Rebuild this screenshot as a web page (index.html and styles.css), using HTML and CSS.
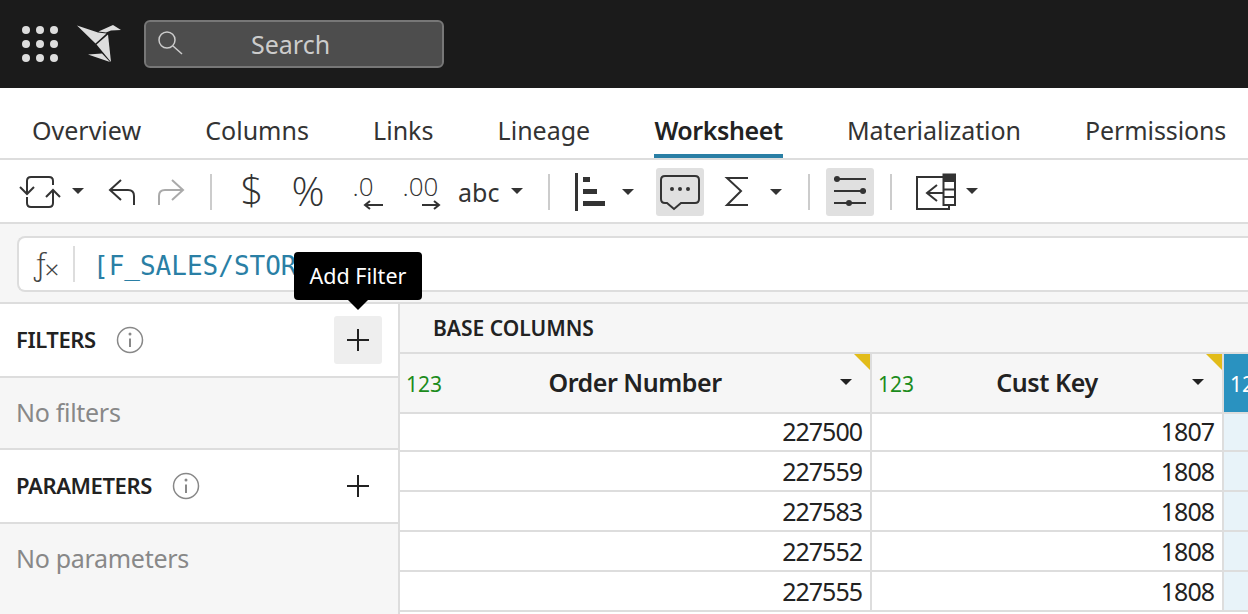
FILE: index.html
```html
<!DOCTYPE html>
<html>
<head>
  <meta charset="UTF-8">
  <title>Worksheet</title>
  <link rel="stylesheet" href="styles.css">
</head>
<body>
  <header class="topbar">
    <svg class="app-grid" width="38" height="38" viewBox="0 0 38 38">
      <g fill="#ddd">
        <circle cx="5" cy="5" r="4"/><circle cx="19" cy="5" r="4"/><circle cx="33" cy="5" r="4"/>
        <circle cx="5" cy="19" r="4"/><circle cx="19" cy="19" r="4"/><circle cx="33" cy="19" r="4"/>
        <circle cx="5" cy="33" r="4"/><circle cx="19" cy="33" r="4"/><circle cx="33" cy="33" r="4"/>
      </g>
    </svg>
    <svg class="logo" width="44" height="38" viewBox="77 25 44 38">
      <g fill="#ddd">
        <polygon points="77,25.500 98,32.500 106.500,33.500 95.500,43.500"/>
        <polygon points="98.500,31.500 113,25 121,30 111,30.500 106,32.500"/>
        <polygon points="96.500,44.500 108,34.500 111,62"/>
        <polygon points="88,54.500 102,53.500 110,62"/>
      </g>
    </svg>
    <div class="search">
      <svg width="26" height="26" viewBox="0 0 26 26" fill="none" stroke="#ccc" stroke-width="1.500">
        <circle cx="9" cy="9" r="8"/><path d="M15 15l9 8"/>
      </svg>
      <span class="search-text">Search</span>
    </div>
  </header>

  <nav class="tabs">
    <a class="tab">Overview</a>
    <a class="tab">Columns</a>
    <a class="tab">Links</a>
    <a class="tab">Lineage</a>
    <a class="tab active">Worksheet</a>
    <a class="tab tight">Materialization</a>
    <a class="tab tight">Permissions</a>
  </nav>

  <div class="toolbar">
    <!-- swap -->
    <svg class="tool" width="50" height="62" viewBox="16 0 50 62">
      <path d="M53 25V21Q53 17 49 17H31Q27 17 27 21V33M20 27L27 34L34 27M27 37V43Q27 47 31 47H49Q53 47 53 43V30M46 37L53 30L60 37"/>
    </svg>
    <svg class="tool" width="34" height="62" viewBox="66 0 34 62"><path class="fill" d="M72 28H84L78 34Z"/></svg>
    <svg class="tool" width="46" height="62" viewBox="100 0 46 62">
      <path d="M121 20L110 30L121 40M110 30H128Q134 30 134 36V45"/>
    </svg>
    <svg class="tool" width="46" height="62" viewBox="146 0 46 62">
      <path class="off" d="M172 20L183 30L172 40M183 30H165Q159 30 159 36V45"/>
    </svg>
    <span class="tool-sep sep-a"></span>
    <svg class="tool" width="24" height="62" viewBox="240 0 24 62">
      <text class="glyph" x="252" y="45" text-anchor="middle" font-size="40">$</text>
    </svg>
    <svg class="tool tool-pct" width="36" height="62" viewBox="290 0 36 62">
      <text class="glyph" x="308" y="46" text-anchor="middle" font-size="41">%</text>
    </svg>
    <svg class="tool tool-dec" width="36" height="62" viewBox="352 0 36 62">
      <text class="glyph" x="352.500" y="36" font-size="26">.0</text>
      <path d="M383 45H366M370 41L365 45L370 49"/>
    </svg>
    <svg class="tool tool-inc" width="40" height="62" viewBox="402 0 40 62">
      <text class="glyph" x="402.500" y="36" font-size="26">.00</text>
      <path d="M422 45H438M434 41L439 45L434 49"/>
    </svg>
    <span class="abc">abc</span>
    <svg class="tool" width="24" height="62" viewBox="505 0 24 62"><path class="fill" d="M511 28H523L517 34Z"/></svg>
    <span class="tool-sep sep-b"></span>
    <svg class="tool tool-bars" width="34" height="62" viewBox="573 0 34 62">
      <path class="fill" d="M575 13H578V51H575ZM583 17H590V22H583ZM583 29H597V34H583ZM583 41H605V46H583Z"/>
    </svg>
    <svg class="tool" width="49" height="62" viewBox="607 0 49 62"><path class="fill" d="M622 29H634L628 35Z"/></svg>
    <div class="tool-btn">
      <svg width="48" height="48" viewBox="656 8 48 48">
        <path d="M665 16H695Q699 16 699 20V39Q699 43 695 43H681L674 49L667 43H665Q661 43 661 39V20Q661 16 665 16Z"/>
        <path class="fill" d="M670 29a2 2 0 1 0 4 0a2 2 0 1 0-4 0M678 29a2 2 0 1 0 4 0a2 2 0 1 0-4 0M686 29a2 2 0 1 0 4 0a2 2 0 1 0-4 0"/>
      </svg>
    </div>
    <svg class="tool" width="52" height="62" viewBox="704 0 52 62">
      <path d="M748 18H727L741 31L727 45H748"/>
    </svg>
    <svg class="tool" width="40" height="62" viewBox="756 0 40 62"><path class="fill" d="M770 29H782L776 35Z"/></svg>
    <span class="tool-sep sep-c"></span>
    <div class="tool-btn">
      <svg width="48" height="48" viewBox="826 8 48 48">
        <path d="M834 19H866M834 31H866M834 43H866"/>
        <path class="fill" d="M834 19a3 3 0 1 0 6 0a3 3 0 1 0-6 0M860 31a3 3 0 1 0 6 0a3 3 0 1 0-6 0M846 43a3 3 0 1 0 6 0a3 3 0 1 0-6 0"/>
      </svg>
    </div>
    <span class="tool-sep sep-d"></span>
    <svg class="tool tool-table" width="42" height="62" viewBox="915 0 42 62">
      <path d="M943 17H917V49H949V45"/>
      <path d="M943 33H927M937 25L927 33L937 41"/>
      <path class="white" d="M943.500 14.500H955V45H943.500Z"/>
      <path class="fill" d="M943 14H956V22H943Z"/>
      <path d="M943 29.500H955M943 37H955"/>
    </svg>
    <svg class="tool" width="26" height="62" viewBox="957 0 26 62"><path class="fill" d="M966 28H978L972 34Z"/></svg>
  </div>

  <div class="formula-row">
    <div class="formula">
      <span class="fx">&#402;<small>&#215;</small></span>
      <span class="formula-text">[F_SALES/STOR</span>
    </div>
    <div class="tooltip">Add Filter</div>
  </div>

  <main class="content">
    <aside class="sidebar">
      <div class="side-head">
        <span class="side-title">FILTERS</span>
        <svg class="info" width="28" height="28" viewBox="0 0 28 28">
          <circle cx="14" cy="14" r="12.500"/><path d="M14 12.500V21"/><circle class="dot" cx="14" cy="8" r="1.500"/>
        </svg>
        <span class="add-btn hovered">
          <svg width="22" height="22" viewBox="0 0 22 22"><path d="M11 0V22M0 11H22"/></svg>
        </span>
      </div>
      <div class="side-empty">No filters</div>
      <div class="side-head">
        <span class="side-title">PARAMETERS</span>
        <svg class="info" width="28" height="28" viewBox="0 0 28 28">
          <circle cx="14" cy="14" r="12.500"/><path d="M14 12.500V21"/><circle class="dot" cx="14" cy="8" r="1.500"/>
        </svg>
        <span class="add-btn">
          <svg width="22" height="22" viewBox="0 0 22 22"><path d="M11 0V22M0 11H22"/></svg>
        </span>
      </div>
      <div class="side-empty last">No parameters</div>
    </aside>

    <section class="sheet">
      <div class="sheet-title">BASE COLUMNS</div>
      <div class="grid">
        <div class="col-head flagged">
          <span class="col-type">123</span><span class="col-name">Order Number</span><span class="col-caret"></span>
        </div>
        <div class="col-head flagged">
          <span class="col-type">123</span><span class="col-name">Cust Key</span><span class="col-caret"></span>
        </div>
        <div class="col-head selected"><span class="col-type">123</span></div>

        <div class="cell first">227500</div><div class="cell first">1807</div><div class="cell first selected"></div>
        <div class="cell">227559</div><div class="cell">1808</div><div class="cell selected"></div>
        <div class="cell">227583</div><div class="cell">1808</div><div class="cell selected"></div>
        <div class="cell">227552</div><div class="cell">1808</div><div class="cell selected"></div>
        <div class="cell">227555</div><div class="cell">1808</div><div class="cell selected"></div>
      </div>
    </section>
  </main>
</body>
</html>
```

FILE: styles.css
```css
* {
  box-sizing: border-box;
}
html, body {
  height: 614px;
  overflow: hidden;
}
body {
  margin: 0;
  font-family: "Noto Sans", sans-serif;
  font-size: 25px;
  color: #222;
  background-color: #fff;
}

/* top bar */
.topbar {
  height: 88px;
  background-color: #1b1b1b;
  display: flex;
  align-items: center;
  padding-left: 21px;
}
.logo {
  margin-left: 18px;
}
.search {
  width: 300px;
  height: 48px;
  margin-left: 23px;
  padding-left: 12px;
  display: flex;
  align-items: center;
  background-color: #4d4d4d;
  border: 2px solid #777;
  border-radius: 6px;
}
.search-text {
  margin-left: 67px;
  color: #ccc;
}

/* tabs */
.tabs {
  height: 72px;
  padding-left: 32px;
  display: flex;
  gap: 64.200px;
  border-bottom: 2px solid #ddd;
}
.tab {
  padding-top: 25px;
  height: 70px;
  white-space: nowrap;
  color: #333;
}
.tab.tight {
  letter-spacing: -0.100px;
}
.tab.active {
  font-weight: 600;
  letter-spacing: -0.400px;
  color: #222;
  border-bottom: 4px solid #2a7fa5;
}

/* toolbar */
.toolbar {
  height: 64px;
  padding-left: 16px;
  display: flex;
  align-items: flex-start;
  border-bottom: 2px solid #ddd;
}
.tool path,
.tool-btn path {
  fill: none;
  stroke: #333;
  stroke-width: 2;
}
.tool path.fill,
.tool-btn path.fill {
  fill: #333;
  stroke: none;
}
.tool path.off {
  stroke: #aaa;
}
.tool path.white {
  fill: #fff;
}
.glyph {
  font-family: "Open Sans", sans-serif;
  font-weight: 300;
  fill: #333;
}
.tool-sep {
  width: 2px;
  height: 36px;
  margin-top: 14px;
  background-color: #ccc;
}
.sep-a { margin-left: 18px; margin-right: 28px; }
.sep-b { margin-left: 19px; margin-right: 23px; }
.sep-c { margin-left: 12px; margin-right: 16px; }
.sep-d { margin-left: 16px; margin-right: 23px; }
.tool-pct { margin-left: 26px; }
.tool-dec { margin-left: 26px; }
.tool-inc { margin-left: 14px; }
.abc {
  width: 47px;
  margin-left: 16px;
  margin-top: 15px;
  font-size: 25px;
  white-space: nowrap;
  color: #333;
}
.tool-btn {
  width: 48px;
  height: 48px;
  margin-top: 8px;
  background-color: #e0e0e0;
  border-radius: 3px;
  display: flex;
}

/* formula bar */
.formula-row {
  position: relative;
  height: 80px;
  padding: 12px 0 10px 17px;
  background-color: #f6f6f6;
  border-bottom: 2px solid #ddd;
}
.formula {
  height: 56px;
  display: flex;
  align-items: center;
  background-color: #fff;
  border: 2px solid #ddd;
  border-right: 0;
  border-radius: 8px 0 0 8px;
}
.fx {
  width: 56px;
  height: 36px;
  padding-left: 15px;
  border-right: 2px solid #ddd;
  font-weight: 300;
  font-size: 29px;
  line-height: 36px;
  white-space: nowrap;
  color: #444;
}
.fx small {
  margin-left: -1px;
  font-size: 26px;
  vertical-align: -4px;
}
.formula-text {
  margin-left: 18px;
  padding-top: 3px;
  font-family: "DejaVu Sans Mono", monospace;
  font-size: 26px;
  color: #2a7fa5;
}
.tooltip {
  position: absolute;
  left: 294px;
  top: 28px;
  width: 128px;
  height: 48px;
  line-height: 48px;
  text-align: center;
  font-size: 21.500px;
  color: #fff;
  background-color: #000;
  border-radius: 4px;
  z-index: 2;
}
.tooltip::after {
  content: "";
  position: absolute;
  left: 54px;
  top: 48px;
  border-top: 10px solid #000;
  border-left: 10px solid transparent;
  border-right: 10px solid transparent;
}

/* main */
.content {
  display: flex;
  height: 311px;
}
.sidebar {
  width: 400px;
  flex-shrink: 0;
  display: flex;
  flex-direction: column;
  border-right: 2px solid #ddd;
}
.side-head {
  height: 74px;
  padding: 0 16px;
  display: flex;
  align-items: center;
  border-bottom: 2px solid #ddd;
}
.side-title {
  padding-bottom: 2px;
  font-size: 22px;
  font-weight: 600;
  letter-spacing: -0.400px;
}
.info {
  margin-left: 20px;
}
.info circle {
  fill: none;
  stroke: #888;
  stroke-width: 1.500;
}
.info path {
  stroke: #888;
  stroke-width: 2;
}
.info .dot {
  fill: #888;
  stroke: none;
}
.add-btn {
  width: 48px;
  height: 48px;
  margin-left: auto;
  display: flex;
  align-items: center;
  justify-content: center;
  border-radius: 3px;
}
.add-btn.hovered {
  background-color: #eee;
}
.add-btn path {
  stroke: #222;
  stroke-width: 2;
}
.side-empty {
  height: 72px;
  padding: 17px 0 0 16px;
  letter-spacing: -0.300px;
  color: #888;
  background-color: #f6f6f6;
  border-bottom: 2px solid #ddd;
}
.side-empty.last {
  flex: 1;
  border-bottom: 0;
}

/* sheet */
.sheet {
  flex: 1;
  min-width: 0;
}
.sheet-title {
  height: 50px;
  padding-left: 33px;
  line-height: 48px;
  font-size: 21px;
  font-weight: 600;
  background-color: #f6f6f6;
  border-bottom: 2px solid #ddd;
}
.grid {
  display: grid;
  grid-template-columns: 472px 352px 1fr;
  grid-template-rows: 60px 38px repeat(4, 40px);
}
.col-head {
  position: relative;
  display: flex;
  align-items: center;
  justify-content: center;
  padding-bottom: 2px;
  background-color: #f6f6f6;
  border-right: 2px solid #ddd;
  border-bottom: 2px solid #ddd;
}
.col-head.flagged::after {
  content: "";
  position: absolute;
  top: 0;
  right: 0;
  border-top: 16px solid #e2bc1a;
  border-left: 16px solid transparent;
}
.col-head.selected {
  justify-content: flex-start;
  background-color: #2a92c0;
  border-right: 0;
}
.col-head.selected .col-type {
  color: #fff;
}
.col-type {
  position: absolute;
  left: 6px;
  padding-top: 3px;
  font-size: 21px;
  color: #1c8c1c;
}
.col-name {
  font-weight: 600;
  letter-spacing: -0.450px;
}
.col-caret {
  position: absolute;
  right: 18px;
  border-top: 6px solid #222;
  border-left: 6px solid transparent;
  border-right: 6px solid transparent;
}
.cell {
  padding-right: 8px;
  line-height: 38px;
  letter-spacing: -1px;
  text-align: right;
  border-right: 2px solid #ddd;
  border-bottom: 2px solid #ddd;
}
.cell.first {
  line-height: 34px;
}
.cell.selected {
  background-color: #e8f3f9;
  border-right: 0;
}
```
